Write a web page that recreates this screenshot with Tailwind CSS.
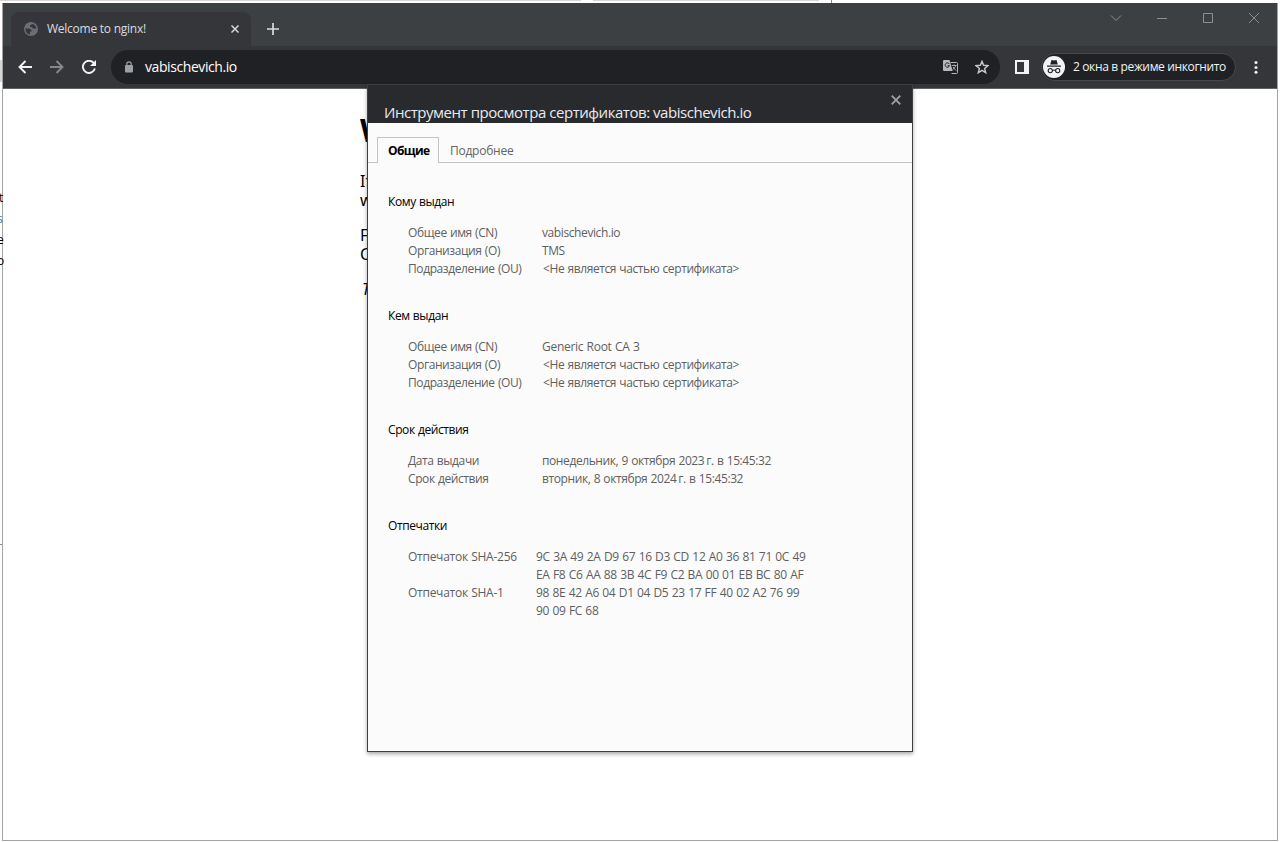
<!DOCTYPE html>
<html lang="ru">
<head>
<meta charset="utf-8">
<title>Welcome to nginx!</title>
<script src="https://cdn.jsdelivr.net/npm/@tailwindcss/browser@4"></script>
</head>
<body class="relative h-[842px] w-[1280px] overflow-hidden bg-white font-['Open_Sans','Noto_Sans',sans-serif] text-[12px]">
<!-- window behind -->
<div class="absolute top-0 left-0 h-px w-[581px] bg-[#d6d6d6]"></div>
<div class="absolute top-0 left-[593px] h-px w-[226px] bg-[#d6d6d6]"></div>
<div class="absolute top-0 left-[831px] h-[3px] w-px bg-[#8a8a8a]"></div>
<div class="absolute top-[60px] left-0 h-[22px] w-[2px] bg-[#d6d6d6]"></div>
<div class="absolute top-[544px] left-0 h-px w-[3px] bg-[#8a8a8a]"></div>

<!-- browser window -->
<div class="absolute top-[3px] left-[2px] flex h-[838px] w-[1276px] flex-col border-x border-b border-[#a3a3a3]">
  <div class="flex h-[43px] items-start bg-[#3c4043] pl-2">
    <div class="mt-[9px] flex h-[34px] w-[240px] items-center rounded-t-lg bg-[#35363a] pr-[12px] pl-[13px] text-[#dadce0]">
      <svg class="h-[14px] w-[14px]" viewBox="0 0 14 14"><circle cx="7" cy="7" r="7" fill="#6b6e73"/><path d="M1.500 6.500h4l2 1.500v1.500h-1.500v3c-2.500-.3-4.500-2.500-4.500-5zM8 2l-2 1.500v1.500h1.500l1.500 1.500h3.500C12.200 4.500 10.500 2.300 8 2z" fill="#35363a"/></svg>
      <span class="ml-[9px] whitespace-nowrap tracking-[-0.25px]">Welcome to nginx!</span>
      <svg class="ml-auto h-[8px] w-[8px]" viewBox="0 0 8 8"><path d="M.5.5l7 7M7.500.5l-7 7" stroke="#d5d7da" stroke-width="1.500"/></svg>
    </div>
    <svg class="mt-[20px] ml-4 h-3 w-3" viewBox="0 0 12 12"><path d="M6 0v12M0 6h12" stroke="#dadce0" stroke-width="1.700"/></svg>
    <div class="mt-[9px] mr-[17px] ml-auto flex gap-[34px]">
      <svg class="h-3 w-3" viewBox="0 0 12 12"><path d="M1 3.500l5 5 5-5" fill="none" stroke="#8b8e91"/></svg>
      <svg class="h-3 w-3" viewBox="0 0 12 12"><path d="M1 6.500h10" stroke="#8b8e91"/></svg>
      <svg class="h-3 w-3" viewBox="0 0 12 12"><path d="M1.500 1.500h9v9h-9z" fill="none" stroke="#8b8e91"/></svg>
      <svg class="h-3 w-3" viewBox="0 0 12 12"><path d="M1 1l10 10M11 1L1 11" stroke="#8b8e91"/></svg>
    </div>
  </div>
  <div class="flex h-[43px] shrink-0 items-center border-b border-[#5f6164] bg-[#35363a] pl-[15px]">
    <svg class="h-[14px] w-[14px]" viewBox="0 0 14 14"><path d="M14 7H1.500M7.500 1L1.500 7l6 6" fill="none" stroke="#f1f3f4" stroke-width="1.900"/></svg>
    <svg class="ml-[18px] h-[14px] w-[14px]" viewBox="0 0 14 14"><path d="M0 7h12.500M6.500 1l6 6-6 6" fill="none" stroke="#85878b" stroke-width="1.900"/></svg>
    <svg class="ml-[18px] h-[14px] w-[14px]" viewBox="0 0 14 14"><path d="M12.900 8.500A6.100 6.100 0 1 1 11.500 2.700L12.500 3.800" fill="none" stroke="#f1f3f4" stroke-width="1.900"/><path d="M14 0v6H8z" fill="#f1f3f4"/></svg>
    <div class="ml-[15px] flex h-[34px] w-[889px] items-center rounded-full bg-[#202124] pr-[11px] pl-[14px]">
      <svg class="h-[12px] w-[8px]" viewBox="0 0 8 12"><path d="M1.800 5V3a2.200 2.200 0 0 1 4.400 0v2" fill="none" stroke="#9aa0a6" stroke-width="1.200"/><rect y="4" width="8" height="7.500" rx="1" fill="#9aa0a6"/></svg>
      <span class="ml-[12px] pb-[2px] text-[14px] whitespace-nowrap tracking-[-0.42px] text-white">vabischevich.io</span>
      <!-- translate -->
      <svg class="ml-auto h-[14px] w-[15px]" viewBox="0 0 15 14"><path d="M1 0h5.500l3.200 11H1a1 1 0 0 1-1-1V1a1 1 0 0 1 1-1z" fill="#b4b7bb"/><path d="M7.500 2.500H13.500a1 1 0 0 1 1 1v9a1 1 0 0 1-1 1H8.500" fill="none" stroke="#b4b7bb"/><path d="M6.300 4A2.200 2.200 0 1 0 6.500 5.700H4.700" fill="none" stroke="#202124"/><path d="M8.800 5.500h4.700M11.200 4.500v1M12.700 5.500c-.5 2-1.500 3-3 4M10 7l3 3.500" fill="none" stroke="#b4b7bb" stroke-width=".9"/></svg>
      <svg class="ml-[17px] h-[14px] w-[14px]" viewBox="0 0 14 14"><path d="M7 1.300l1.600 4 4.400.3-3.400 2.800 1.100 4.300L7 10.400l-3.700 2.300 1.100-4.300L1 5.600l4.400-.3z" fill="none" stroke="#c7c9cc" stroke-width="1.400"/></svg>
    </div>
    <svg class="ml-[15px] h-[14px] w-[14px]" viewBox="0 0 14 14"><path d="M0 0h14v14H0zM2 2v10h7V2z" fill="#f1f3f4" fill-rule="evenodd"/></svg>
    <div class="ml-[12px] flex h-[28px] w-[195px] items-center rounded-full border border-[#46484c] bg-[#202124] pl-px">
      <svg class="h-[22px] w-[22px]" viewBox="0 0 22 22"><circle cx="11" cy="11" r="11" fill="#f1f3f4"/><path d="M7.200 8.500l1.300-4.500 2.500.6 2.500-.6 1.300 4.500zM4 9.600h14v1.100H4z" fill="#202124"/><g fill="none" stroke="#202124" stroke-width="1.100"><circle cx="7.300" cy="14.600" r="2.100"/><circle cx="14.700" cy="14.600" r="2.100"/><path d="M9.400 14.400q1.600-.7 3.200 0"/></g></svg>
      <span class="ml-[8px] whitespace-nowrap tracking-[-0.36px] text-[#f1f3f4]">2 окна в режиме инкогнито</span>
    </div>
    <svg class="ml-[18px] h-[14px] w-[4px]" viewBox="0 0 4 14"><g fill="#f1f3f4"><circle cx="2" cy="2.500" r="1.500"/><circle cx="2" cy="7.500" r="1.500"/><circle cx="2" cy="12.300" r="1.500"/></g></svg>
  </div>
  <!-- page strip left of the dialog -->
  <main class="ml-[357px] w-[8px] overflow-hidden font-['Noto_Sans',sans-serif] text-[16px] leading-[19px] whitespace-nowrap text-black">
    <h1 class="mt-[21px] text-[32px] leading-[39px] font-bold">W</h1>
    <p class="mt-[23px]">If<br>w</p>
    <p class="mt-4">F<br>C</p>
    <p class="mt-4 pl-[2px]"><em>T</em></p>
  </main>
</div>

<!-- text of the window behind, showing at the left edge -->
<div class="absolute top-[187px] left-0 flex w-[4px] flex-col overflow-hidden text-[12px] leading-[21px]">
  <span class="-ml-px">t</span><span class="-ml-[3px] text-[#2b7fc4]">s</span><span class="-ml-[3px]">e</span><span class="-ml-[3px]">o</span>
</div>

<!-- certificate viewer -->
<section class="absolute top-[84px] left-[367px] flex h-[668px] w-[546px] flex-col border border-[#3c4043] bg-[#fbfbfb] shadow-[0_2px_4px_rgba(0,0,0,0.35)]">
  <header class="relative h-[38px] shrink-0 overflow-hidden bg-[#292a2d] pt-[17px] pl-4">
    <h2 class="text-[15px] leading-[21px] whitespace-nowrap tracking-[-0.46px] text-[#e8eaed]">Инструмент просмотра сертификатов: vabischevich.io</h2>
    <svg class="absolute top-[10px] right-[11px] h-[10px] w-[10px]" viewBox="0 0 10 10"><path d="M.7.7l8.600 8.600M9.300.7L.7 9.300" stroke="#9aa0a6" stroke-width="1.900"/></svg>
  </header>
  <nav class="flex h-[40px] shrink-0 items-end border-b border-[#c4c4c4] pl-[9px]">
    <div class="-mb-px flex h-[26px] w-[62px] items-center border border-b-0 border-[#c4c4c4] bg-[#fbfbfb] pl-[10px] font-bold tracking-[-0.6px]">Общие</div>
    <div class="flex h-[25px] items-center pt-[2px] pl-[11px] tracking-[-0.25px] text-[#646464]">Подробнее</div>
  </nav>
  <div class="flex flex-col gap-[29px] pt-[30px] pl-5 leading-[18px] whitespace-nowrap tracking-[-0.4px] text-[#5f5f5f] [word-spacing:0.5px]">
    <div>
      <h3 class="mb-[13px] text-black">Кому выдан</h3>
      <div class="grid grid-cols-[134px_auto] pl-5">
        <span>Общее имя (CN)</span><span>vabischevich.io</span>
        <span>Организация (O)</span><span>TMS</span>
        <span>Подразделение (OU)</span><span class="pl-px">&lt;Не является частью сертификата&gt;</span>
      </div>
    </div>
    <div>
      <h3 class="mb-[13px] text-black">Кем выдан</h3>
      <div class="grid grid-cols-[134px_auto] pl-5">
        <span>Общее имя (CN)</span><span class="tracking-[-0.28px]">Generic Root CA 3</span>
        <span>Организация (O)</span><span class="pl-px">&lt;Не является частью сертификата&gt;</span>
        <span>Подразделение (OU)</span><span class="pl-px">&lt;Не является частью сертификата&gt;</span>
      </div>
    </div>
    <div>
      <h3 class="mb-[13px] text-black">Срок действия</h3>
      <div class="grid grid-cols-[134px_auto] pl-5">
        <span>Дата выдачи</span><span>понедельник, 9 октября 2023<span class="[word-spacing:-0.8px]"> </span>г. в 15:45:32</span>
        <span>Срок действия</span><span>вторник, 8 октября 2024<span class="[word-spacing:-0.8px]"> </span>г. в 15:45:32</span>
      </div>
    </div>
    <div>
      <h3 class="mb-[13px] text-black">Отпечатки</h3>
      <div class="grid grid-cols-[128px_auto] pl-5">
        <span class="tracking-[-0.26px]">Отпечаток SHA-256</span><span class="tracking-[-0.3px]">9C 3A 49 2A D9 67 16 D3 CD 12 A0 36 81 71 0C 49<br>EA F8 C6 AA 88 3B 4C F9 C2 BA 00 01 EB BC 80 AF</span>
        <span class="tracking-[-0.26px]">Отпечаток SHA-1</span><span class="tracking-[-0.3px]">98 8E 42 A6 04 D1 04 D5 23 17 FF 40 02 A2 76 99<br>90 09 FC 68</span>
      </div>
    </div>
  </div>
</section>
</body>
</html>
